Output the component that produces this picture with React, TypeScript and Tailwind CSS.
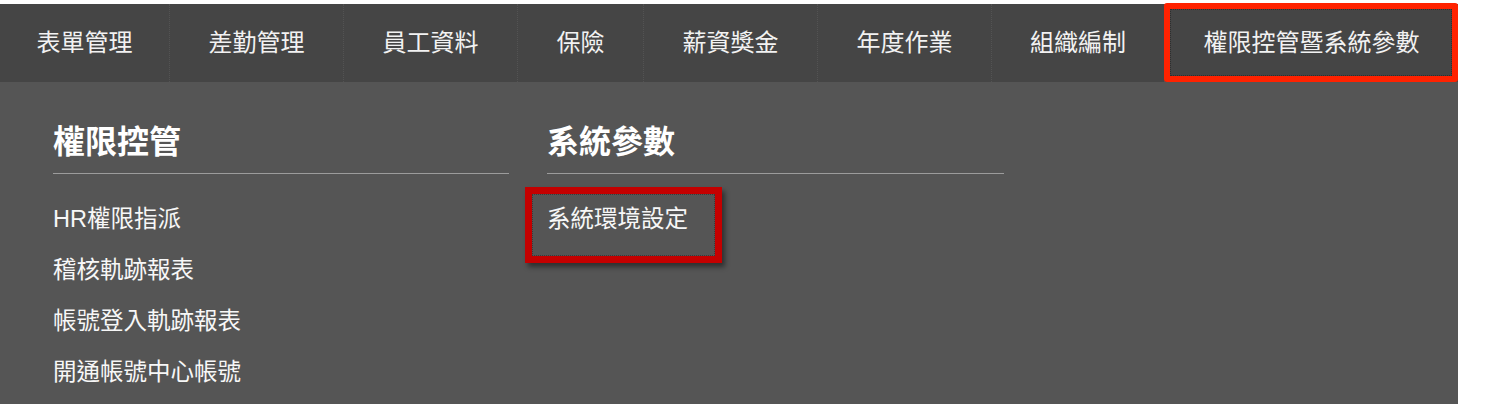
const tabs = [
  { label: "表單管理", w: "w-[170px]" },
  { label: "差勤管理", w: "w-[174px]" },
  { label: "員工資料", w: "w-[174px]" },
  { label: "保險", w: "w-[126px]" },
  { label: "薪資獎金", w: "w-[174px]" },
  { label: "年度作業", w: "w-[174px]" },
  { label: "組織編制", w: "w-[173px]" },
  { label: "權限控管暨系統參數", w: "w-[293px]", active: true },
];

const columns = [
  {
    title: "權限控管",
    w: "w-[456px]",
    items: ["HR權限指派", "稽核軌跡報表", "帳號登入軌跡報表", "開通帳號中心帳號"],
  },
  {
    title: "系統參數",
    w: "w-[457px]",
    items: ["系統環境設定"],
    marked: "系統環境設定",
  },
];

const font = "font-['Liberation_Sans','Noto_Sans_CJK_TC',sans-serif]";

function NavTab({ label, w, active }: { label: string; w: string; active?: boolean }) {
  return (
    <div className={`${w} relative h-full shrink-0 text-center text-[24px] leading-[78px] text-[#f2f2f2]`}>
      {label}
      {active ? (
        <div className="pointer-events-none absolute -top-px -left-px right-0 bottom-0 rounded-[3px] border-[6px] border-[#ff2200]">
          <div className="h-full w-full border border-dotted border-[#2e2e2e]" />
        </div>
      ) : null}
    </div>
  );
}

export default function App() {
  return (
    <div className={`min-h-[404px] bg-white pt-[4px] ${font}`}>
      <div className="w-[1458px]">
        <nav className="flex h-[78px] divide-x divide-dotted divide-[#535353] bg-[#454545]">
          {tabs.map((t) => (
            <NavTab key={t.label} label={t.label} w={t.w} active={t.active} />
          ))}
        </nav>

        <div className="flex h-[322px] gap-[38px] bg-[#555555] pl-[53px] pt-[36px]">
          {columns.map((col) => (
            <div key={col.title} className={col.w}>
              <h3 className="border-b border-[#9c9c9c] pb-[7px] text-[32px] font-bold leading-[48px] text-white">
                {col.title}
              </h3>
              <ul className="pt-[20px]">
                {col.items.map((item) => (
                  <li key={item} className="relative text-[23.5px] leading-[51px] text-[#f7f7f7]">
                    {item}
                    {col.marked === item ? (
                      <div className="pointer-events-none absolute -top-[7px] -left-[22px] h-[76px] w-[197px] border-[7px] border-[#c40000] shadow-[3px_4px_5px_rgba(0,0,0,0.45)]">
                        <div className="h-full w-full border border-dotted border-[#3a3a3a]" />
                      </div>
                    ) : null}
                  </li>
                ))}
              </ul>
            </div>
          ))}
        </div>
      </div>
    </div>
  );
}
